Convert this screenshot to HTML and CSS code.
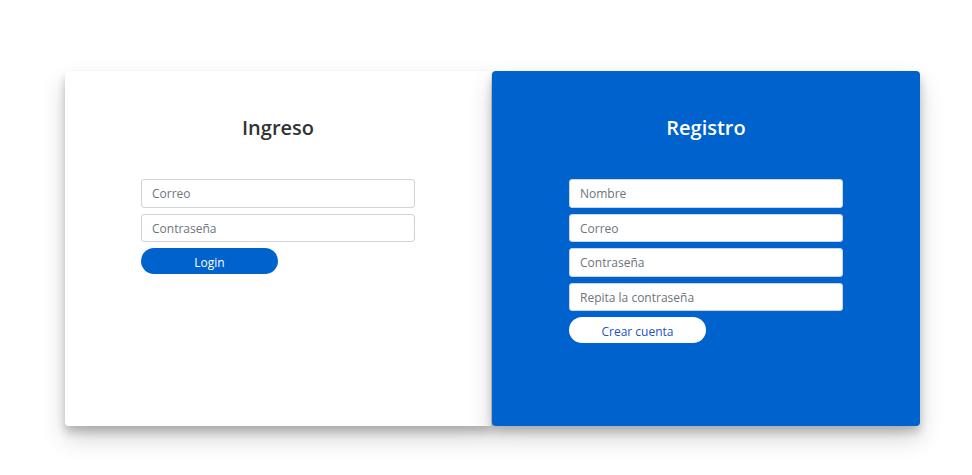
FILE: index.html
```html
<!DOCTYPE html>
<html lang="es">
<head>
<meta charset="utf-8">
<title>Ingreso / Registro</title>
<link rel="stylesheet" href="styles.css">
</head>
<body>
<main class="page">
  <div class="panels">
    <section class="card card-login">
      <h2 class="title">Ingreso</h2>
      <form class="form">
        <input class="field" type="email" placeholder="Correo">
        <input class="field" type="password" placeholder="Contraseña">
        <button class="btn btn-blue" type="button">Login</button>
      </form>
    </section>
    <section class="card card-register">
      <h2 class="title title-light">Registro</h2>
      <form class="form">
        <input class="field" type="text" placeholder="Nombre">
        <input class="field" type="email" placeholder="Correo">
        <input class="field" type="password" placeholder="Contraseña">
        <input class="field" type="password" placeholder="Repita la contraseña">
        <button class="btn btn-white" type="button">Crear cuenta</button>
      </form>
    </section>
  </div>
</main>
</body>
</html>
```

FILE: styles.css
```css
* { box-sizing: border-box; }
html, body { margin: 0; padding: 0; background: #fff; }
body { font-family: "Open Sans", "Noto Sans", Arial, sans-serif; color: #333; }
.page { padding: 71px 52px 60px 65px; }
.panels { display: flex; gap: 1px; width: 855px; height: 355px; }
.card {
  border-radius: 4px;
  box-shadow: 0 12px 24px rgba(0,0,0,0.18), 0 6px 8px rgba(0,0,0,0.2);
  display: flex;
  flex-direction: column;
  align-items: center;
  padding-top: 44px;
}
.card-login { width: 426px; background: #fff; border-radius: 4px 0 0 4px; }
.card-register { width: 428px; background: #0062cc; position: relative; }
.title {
  margin: 0;
  font-size: 20px;
  font-weight: 600;
  line-height: 26px;
  color: #333;
}
.title-light { color: #fff; }
.form {
  margin-top: 38px;
  width: 274px;
  display: flex;
  flex-direction: column;
  gap: 6px;
}
.field {
  height: 28.5px;
  border: 1px solid #ced4da;
  border-radius: 3px;
  padding: 1px 10px 0;
  font-family: inherit;
  font-size: 12px;
  background: #fff;
  color: #495057;
  outline: none;
}
.field::placeholder { color: #6c757d; }
.btn {
  width: 137px;
  height: 26px;
  border: none;
  border-radius: 13px;
  padding: 2px 0 0;
  font-family: inherit;
  font-size: 12px;
  cursor: pointer;
}
.btn-blue { background: #0062cc; color: #fff; }
.btn-white { background: #fff; color: #2450cc; }
```
